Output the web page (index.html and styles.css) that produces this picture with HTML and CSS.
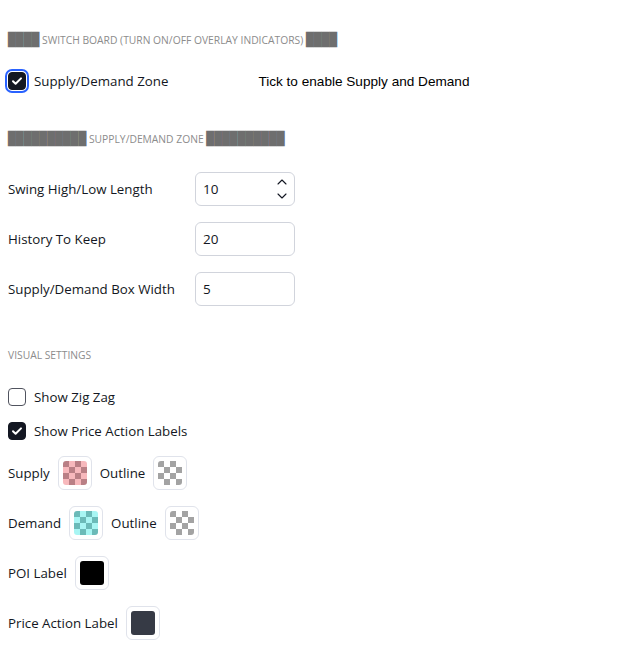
FILE: index.html
```html
<!DOCTYPE html>
<html>
<head>
<meta charset="utf-8">
<link rel="stylesheet" href="styles.css">
</head>
<body>
<div class="panel">
  <div class="title t1"><span class="blk">████</span> SWITCH BOARD (TURN ON/OFF OVERLAY INDICATORS) <span class="blk">████</span></div>
  <div class="row cb-row first">
    <span class="cb checked focus"><svg viewBox="0 0 18 18" width="18" height="18"><path d="M5 9.2l2.6 2.6L13 6.4" fill="none" stroke="#fff" stroke-width="2" stroke-linecap="round" stroke-linejoin="round"/></svg></span>
    <span class="lbl">Supply/Demand Zone</span>
    <span class="tip">Tick to enable Supply and Demand</span>
  </div>

  <div class="title t2"><span class="blk">██████████</span> SUPPLY/DEMAND ZONE <span class="blk">██████████</span></div>
  <div class="inputs">
    <div class="row in-row">
      <span class="lbl">Swing High/Low Length</span>
      <div class="field"><span>10</span>
        <svg class="spin" viewBox="0 0 12 24" width="12" height="24"><path d="M2 7l4-4 4 4M2 17l4 4 4-4" fill="none" stroke="#131722" stroke-width="1.1" stroke-linecap="round" stroke-linejoin="round"/></svg>
      </div>
    </div>
    <div class="row in-row">
      <span class="lbl">History To Keep</span>
      <div class="field"><span>20</span></div>
    </div>
    <div class="row in-row">
      <span class="lbl">Supply/Demand Box Width</span>
      <div class="field"><span>5</span></div>
    </div>
  </div>

  <div class="title t3">VISUAL SETTINGS</div>
  <div class="checks">
    <div class="row cb-row">
      <span class="cb"></span>
      <span class="lbl">Show Zig Zag</span>
    </div>
    <div class="row cb-row">
      <span class="cb checked"><svg viewBox="0 0 18 18" width="18" height="18"><path d="M5 9.2l2.6 2.6L13 6.4" fill="none" stroke="#fff" stroke-width="2" stroke-linecap="round" stroke-linejoin="round"/></svg></span>
      <span class="lbl">Show Price Action Labels</span>
    </div>
  </div>
  <div class="colors">
    <div class="row col-row">
      <span class="lbl">Supply</span>
      <span class="sw"><span class="chip supply"></span></span>
      <span class="lbl">Outline</span>
      <span class="sw"><span class="chip clear"></span></span>
    </div>
    <div class="row col-row">
      <span class="lbl">Demand</span>
      <span class="sw"><span class="chip demand"></span></span>
      <span class="lbl">Outline</span>
      <span class="sw"><span class="chip clear"></span></span>
    </div>
    <div class="row col-row">
      <span class="lbl">POI Label</span>
      <span class="sw"><span class="chip black"></span></span>
    </div>
    <div class="row col-row">
      <span class="lbl">Price Action Label</span>
      <span class="sw"><span class="chip slate"></span></span>
    </div>
  </div>
</div>
</body>
</html>
```
FILE: styles.css
```css
html, body {
  margin: 0;
  padding: 0;
  background: #fff;
}
body {
  font-family: "Open Sans", "Noto Sans", sans-serif;
  color: #131722;
}
.panel {
  display: flex;
  flex-direction: column;
  padding: 32px 8px 0 8px;
}
.title {
  height: 16px;
  line-height: 16px;
  font-size: 10.3px;
  color: #8c8c8c;
  text-transform: uppercase;
  white-space: nowrap;
}
.blk {
  color: #6e6e6e;
  font-family: "DejaVu Sans Mono", monospace;
  font-size: 13px;
  letter-spacing: 0;
}
.row {
  display: flex;
  align-items: center;
  height: 34px;
}
.lbl {
  font-size: 13.3px;
  white-space: nowrap;
}
.cb {
  width: 18px;
  height: 18px;
  box-sizing: border-box;
  border: 1px solid #50535e;
  border-radius: 4px;
  margin-right: 8px;
  display: flex;
  flex-shrink: 0;
}
.cb.checked {
  background: #131722;
  border-color: #131722;
}
.cb.checked svg {
  margin: -1px;
}
.cb.focus {
  box-shadow: 0 0 0 1px #fff, 0 0 0 3px #2962ff;
}
.cb-row.first {
  margin-top: 16px;
}
.tip {
  margin-left: 90px;
  font-family: "Liberation Sans", sans-serif;
  font-size: 13.6px;
  color: #000;
}
.t2 {
  margin-top: 33px;
}
.inputs {
  display: flex;
  flex-direction: column;
  gap: 16px;
  margin-top: 25px;
}
.in-row .lbl {
  width: 187px;
}
.field {
  width: 100px;
  height: 34px;
  box-sizing: border-box;
  border: 1px solid #d1d4dc;
  border-radius: 6px;
  padding: 0 8px 0 7px;
  display: flex;
  align-items: center;
  justify-content: space-between;
  font-size: 13.5px;
}
.spin {
  margin-right: -2px;
}
.t3 {
  margin-top: 41px;
}
.checks {
  display: flex;
  flex-direction: column;
  margin-top: 17px;
}
.colors {
  display: flex;
  flex-direction: column;
  gap: 16px;
  margin-top: 8px;
}
.col-row {
  gap: 8px;
}
.sw {
  width: 34px;
  height: 34px;
  box-sizing: border-box;
  border: 1px solid #e0e3eb;
  border-radius: 6px;
  padding: 4px;
  display: flex;
}
.chip {
  width: 24px;
  height: 24px;
  border-radius: 3px;
}
.chip.clear {
  background: repeating-conic-gradient(#ffffff 0 25%, #a3a3a3 0 50%) 0 0 / 12px 12px;
}
.chip.supply {
  background: repeating-conic-gradient(#f7b8bc 0 25%, #b97f85 0 50%) 0 0 / 12px 12px;
}
.chip.demand {
  background: repeating-conic-gradient(#a8f5f3 0 25%, #6bbab8 0 50%) 0 0 / 12px 12px;
}
.chip.black {
  background: #000;
}
.chip.slate {
  background: #363a45;
}
```
